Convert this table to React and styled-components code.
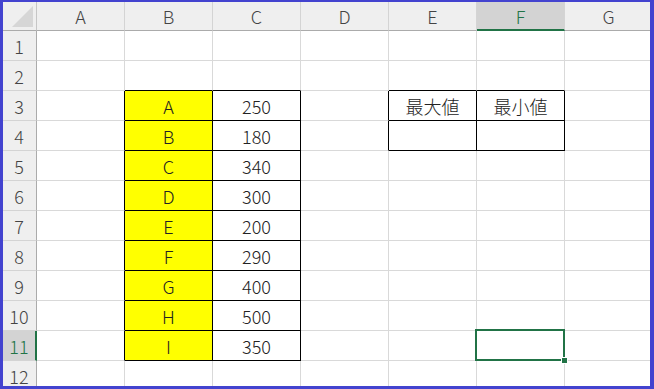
import React from "react";
import styled, { createGlobalStyle, css } from "styled-components";

const Global = createGlobalStyle`
  html, body {
    margin: 0;
    padding: 0;
    background: #fff;
  }
`;

const Frame = styled.div`
  box-sizing: border-box;
  width: 654px;
  height: 389px;
  border-style: solid;
  border-color: #4343cf;
  border-width: 2px 4px 3px 3px;
  overflow: hidden;
  background: #fff;
`;

const Sheet = styled.div`
  display: grid;
  grid-template-columns: 34px repeat(7, 88px);
  grid-template-rows: 29px repeat(12, 30px);
  font-family: "Noto Sans CJK JP", "Noto Sans", sans-serif;
  font-weight: 300;
  font-size: 18px;
`;

const Corner = styled.div`
  position: relative;
  box-sizing: border-box;
  background: #efefef;
  border-right: 1px solid #c6c6c6;
  border-bottom: 1px solid #ababab;
  &::after {
    content: "";
    position: absolute;
    right: 3px;
    bottom: 3px;
    width: 21px;
    height: 21px;
    background: #d6d6d6;
    clip-path: polygon(100% 0, 100% 100%, 0 100%);
  }
`;

const ColHead = styled.div`
  box-sizing: border-box;
  display: flex;
  align-items: center;
  justify-content: center;
  background: ${(p) => (p.$active ? "#d3d3d3" : "#efefef")};
  color: ${(p) => (p.$active ? "#217346" : "#444")};
  border-right: 1px solid #d4d4d4;
  border-bottom: ${(p) => (p.$active ? "2px solid #217346" : "1px solid #ababab")};
  padding-top: ${(p) => (p.$active ? "1px" : "0")};
`;

const RowHead = styled.div`
  box-sizing: border-box;
  display: flex;
  align-items: center;
  justify-content: center;
  background: ${(p) => (p.$active ? "#d3d3d3" : "#efefef")};
  color: ${(p) => (p.$active ? "#217346" : "#444")};
  border-right: ${(p) => (p.$active ? "2px solid #217346" : "1px solid #ababab")};
  border-bottom: 1px solid #d4d4d4;
  padding-right: ${(p) => (p.$active ? "0" : "1px")};
`;

const Cell = styled.div`
  position: relative;
  box-sizing: border-box;
  display: flex;
  align-items: center;
  justify-content: center;
  background: ${(p) => p.$fill || "#fff"};
  color: #222;
  border-right: 1px solid ${(p) => (p.$rightDark ? "#000" : "#d9d9d9")};
  border-bottom: 1px solid ${(p) => (p.$bottomDark ? "#000" : "#d9d9d9")};
  ${(p) =>
    p.$selected &&
    css`
      z-index: 2;
      &::before {
        content: "";
        position: absolute;
        left: -2px;
        top: -2px;
        right: -1px;
        bottom: -1px;
        border: 2px solid #217346;
      }
      &::after {
        content: "";
        position: absolute;
        right: -4px;
        bottom: -4px;
        width: 5px;
        height: 5px;
        background: #217346;
        border: 1px solid #fff;
      }
    `}
`;

const COLS = ["A", "B", "C", "D", "E", "F", "G"];

const items = ["A", "B", "C", "D", "E", "F", "G", "H", "I"];
const values = [250, 180, 340, 300, 200, 290, 400, 500, 350];

const cells = {};
items.forEach((it, i) => {
  cells[`B${i + 3}`] = { text: it, fill: "#ffff00", boxed: true };
  cells[`C${i + 3}`] = { text: String(values[i]), boxed: true };
});
cells.E3 = { text: "最大値", boxed: true };
cells.F3 = { text: "最小値", boxed: true };
cells.E4 = { text: "", boxed: true };
cells.F4 = { text: "", boxed: true };

const boxed = (col, row) => {
  const c = cells[`${col}${row}`];
  return !!(c && c.boxed);
};

const SELECTED = "F11";

export default function App() {
  const rows = Array.from({ length: 12 }, (_, i) => i + 1);
  return (
    <Frame>
      <Global />
      <Sheet>
        <Corner />
        {COLS.map((c) => (
          <ColHead key={c} $active={c === "F"}>
            {c}
          </ColHead>
        ))}
        {rows.map((r) => (
          <React.Fragment key={r}>
            <RowHead $active={r === 11}>{r}</RowHead>
            {COLS.map((c, ci) => {
              const key = `${c}${r}`;
              const data = cells[key];
              const next = COLS[ci + 1];
              return (
                <Cell
                  key={key}
                  $fill={data && data.fill}
                  $rightDark={boxed(c, r) || (next && boxed(next, r))}
                  $bottomDark={boxed(c, r) || boxed(c, r + 1)}
                  $selected={key === SELECTED}
                >
                  {data ? data.text : ""}
                </Cell>
              );
            })}
          </React.Fragment>
        ))}
      </Sheet>
    </Frame>
  );
}
